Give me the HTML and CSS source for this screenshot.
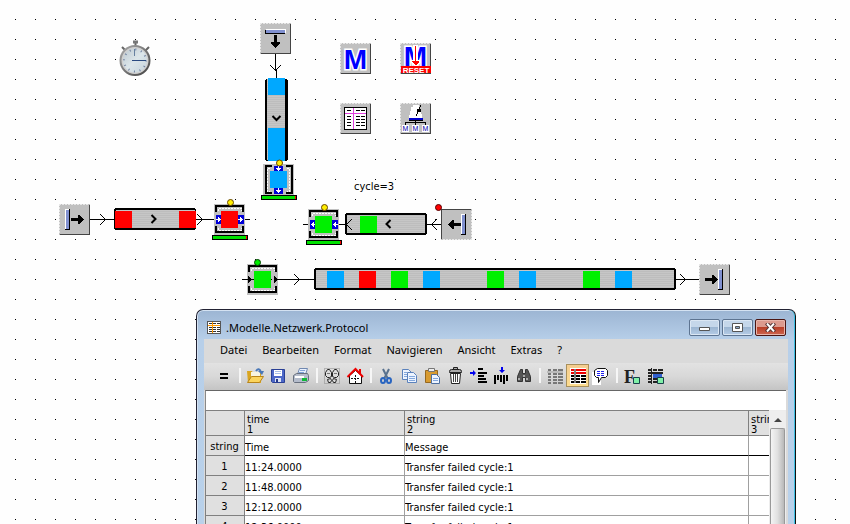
FILE: index.html
```html
<!DOCTYPE html>
<html lang="de">
<head>
<meta charset="utf-8">
<meta name="viewport" content="width=device-width, initial-scale=1">
<title>Netzwerk</title>
<link rel="stylesheet" href="styles.css">
</head>
<body>
<main class="canvas">
<svg class="plant" width="850" height="310" viewBox="0 0 850 310" shape-rendering="crispEdges" aria-label="Modell">
  <defs>
    <pattern id="belt" width="4" height="2" patternUnits="userSpaceOnUse"><path fill="#bdbdbd" d="M0 0h4v2H0z"/><path fill="#c6c6c6" d="M0 0h4v1H0z"/></pattern>
    <linearGradient id="watch" x2="1" y2="1"><stop stop-color="#bcc8d0"/><stop offset=".5" stop-color="#dce6ea"/><stop offset="1" stop-color="#c5d3db"/></linearGradient>
    <linearGradient id="rim" x2="1" y2="1"><stop stop-color="#aaa"/><stop offset="1" stop-color="#444"/></linearGradient>
    <g id="box">
      <path fill="#c0c0c0" d="M0 0h31v31H0z"/>
      <path fill="none" stroke="#e8e8e8" stroke-dasharray="2 1" d="M0 .5h30M.5 0v30"/>
      <path fill="none" stroke="#444" d="M1 30.5h29.500V1"/>
    </g>
    <g id="slot"><path fill="#000" d="M0 0h5v21H0z"/><path fill="#fff" d="M0 0h4v20H0z"/><path fill="#8090d0" d="M1 1h3v19H1z"/></g>
    <path id="arrow" d="M0 3h7V0h2v1h1v1h1v1h1v1h1v1h-1v1h-1v1h-1v1H9v1H7V6H0z"/>
    <path id="chev" fill="none" stroke="#000" shape-rendering="auto" d="M0-5.500L5.500 0 0 5.500"/>
    <path id="mark" fill="none" stroke="#000" stroke-width="2" shape-rendering="auto" d="M0-4l4 4-4 4"/>
    <g id="station">
      <path fill="#c0c0c0" d="M0 0h31v31H0z"/>
      <path fill="none" stroke="#fff" stroke-dasharray="2 1" d="M4 7V4.500h23V7M4 24v2.500h23V24"/>
      <path fill="none" stroke="#000" stroke-width="2" d="M2 8V2h27v6M2 22v6h27v-6"/>
    </g>
    <g id="bar"><path d="M0 0h36v5H0z"/><path fill="#00e000" d="M1 1h33v3H1z"/><path fill="red" d="M34 1h1v3h-1z"/></g>
    <g id="port"><path fill="#0000d8" d="M0 0h6v9H0z"/><path fill="#fff" d="M0 4h2V2h1v1h1v1h1v1H4v1H3v1H2V5H0z"/></g>
  </defs>

  <!-- event controller -->
  <g shape-rendering="auto">
    <path stroke="#666" stroke-width="2" d="M135.500 41v5M122 47l4 4M149 47l-4 4"/>
    <path stroke="#777" stroke-width="3" d="M133 42h5"/>
    <circle cx="135" cy="60.500" r="14.500" fill="#d0d0d0" stroke="url(#rim)" stroke-width="2"/>
    <circle cx="135" cy="60.500" r="12" fill="url(#watch)"/>
    <circle cx="135" cy="60.500" r="11" fill="none" stroke="#7080a0" stroke-width="2" stroke-dasharray="1 4.760"/>
    <path stroke="#2a4a80" d="M132 60.500h14"/><path stroke="#6680a0" d="M134.500 49v7"/>
  </g>

  <!-- vertical feed -->
  <path fill="none" stroke="#000" d="M275.500 54v17M276.500 70v9M279.500 159v8"/>
  <use href="#box" transform="translate(260 23)"/>
  <path d="M265 30h20v4h-20z"/><path fill="#fff" d="M266 29h20v4h-20z"/><path fill="#8090d0" d="M266 30h19v3h-19z"/>
  <use href="#arrow" transform="translate(280 35) rotate(90)"/>
  <use href="#chev" transform="translate(275.500 65) rotate(90)"/>
  <path d="M266 79h21v82h-21zM265 80h23v80h-23z"/><path fill="url(#belt)" d="M267 79h18v81h-18z"/>
  <path fill="#00a8ff" d="M268 78h17v17h-17zM268 128h17v33h-17z"/>
  <use href="#mark" transform="translate(276.500 116) rotate(90)"/>
  <use href="#station" transform="translate(294 164) rotate(90)"/>
  <use href="#port" transform="translate(283 166) rotate(90)"/>
  <use href="#port" transform="translate(283 188) rotate(90)"/>
  <path fill="#00a8ff" d="M270 171h17v17h-17z"/>
  <use href="#bar" x="261" y="195"/>
  <circle cx="279.500" cy="163" r="3" fill="#fe0" stroke="#640" shape-rendering="auto"/>

  <!-- left feed -->
  <path stroke="#000" d="M90 219.500h24M196 219.500h54"/>
  <use href="#box" transform="translate(59 204)"/><use href="#slot" x="65" y="209"/><use href="#arrow" x="71" y="215"/>
  <use href="#chev" x="100" y="219.500"/><use href="#chev" x="197" y="219.500"/>
  <path d="M115 208h80v1h1v20h-1v1h-80v-1h-1v-20h1z"/><path fill="url(#belt)" d="M116 210h79v18h-79z"/>
  <path fill="red" d="M115 211h17v17h-17zM179 211h17v17h-17z"/><use href="#mark" x="151.500" y="219"/>
  <use href="#station" x="214" y="204"/>
  <use href="#port" x="216" y="215"/><use href="#port" x="238" y="215"/>
  <path fill="red" d="M221 211h17v17h-17z"/><use href="#bar" x="212" y="235"/>
  <circle cx="230.500" cy="202.500" r="3" fill="#fe0" stroke="#640" shape-rendering="auto"/>

  <!-- right feed -->
  <path stroke="#000" d="M303 224.500h42M427 224.500h14"/>
  <use href="#station" x="308" y="209"/>
  <use href="#port" transform="translate(316 220) scale(-1 1)"/><use href="#port" transform="translate(338 220) scale(-1 1)"/>
  <path fill="#00f000" d="M315 216h17v17h-17z"/><use href="#bar" x="306" y="240"/>
  <circle cx="324.500" cy="207.500" r="3" fill="#fe0" stroke="#640" shape-rendering="auto"/>
  <path d="M346 213h80v1h1v20h-1v1h-80v-1h-1v-20h1z"/><path fill="url(#belt)" d="M347 215h78v18h-78z"/>
  <path fill="#00f000" d="M360 216h17v17h-17z"/>
  <use href="#mark" transform="translate(390.500 224) scale(-1 1)"/>
  <use href="#chev" transform="translate(352 224.500) scale(-1 1)"/><use href="#chev" transform="translate(437 224.500) scale(-1 1)"/>
  <use href="#box" transform="translate(472 240) rotate(180)"/><use href="#slot" x="461" y="214"/><use href="#arrow" transform="translate(461 220) scale(-1 1)"/>
  <circle cx="438.500" cy="207.500" r="3" fill="red" stroke="#500" shape-rendering="auto"/>

  <!-- main line -->
  <path stroke="#000" d="M242 279.500h72M676 279.500h23"/>
  <use href="#station" x="247" y="264"/><path d="M242 279h30v1h-30zM248 275l4 4.500-4 4.500zM274 275l4 4.500-4 4.500z"/>
  <path fill="#00f000" d="M254 271h17v17h-17z"/>
  <circle cx="257.500" cy="262.500" r="3" fill="#0e0" stroke="#040" shape-rendering="auto"/>
  <use href="#chev" x="294" y="279.500"/><use href="#chev" x="680" y="279.500"/>
  <path d="M315 268h360v1h1v20h-1v1H315v-1h-1v-20h1z"/><path fill="url(#belt)" d="M316 270h358v18H316z"/>
  <path fill="#00a8ff" d="M327 271h17v17h-17zM423 271h17v17h-17zM519 271h17v17h-17zM615 271h17v17h-17z"/>
  <path fill="red" d="M359 271h17v17h-17z"/>
  <path fill="#00f000" d="M391 271h17v17h-17zM487 271h17v17h-17zM583 271h17v17h-17z"/>
  <use href="#box" transform="translate(699 264)"/><use href="#arrow" x="705" y="275"/><use href="#slot" x="718" y="269"/>

  <!-- methods and tables -->
  <use href="#box" transform="translate(340 43)"/><text class="method" x="355.500" y="69">M</text>
  <use href="#box" transform="translate(400 43)"/><text class="method" x="415.500" y="66">M</text>
  <path fill="#fff" d="M413 45h5v15h3v2l-4 4h-3l-4-4v-2h3z"/><path fill="red" d="M415 46h1v15h3v1l-3 3h-1l-3-3v-1h3zM401 66h30v7h-30z"/>
  <text class="reset" x="416" y="73">RESET</text>
  <use href="#box" transform="translate(340 103)"/>
  <path d="M345 108h22v22h-22z"/><path fill="#fff" d="M344 107h22v22h-22z"/>
  <path fill="none" stroke="#000" stroke-width="1" d="M344.500 107.500h22v22h-22z"/>
  <path stroke="#000" d="M347 110.500h4M356 110.500h4M361 110.500h4M347 116.500h4M347 119.500h4M347 122.500h4M347 125.500h4M356 116.500h4M356 119.500h4M356 122.500h4M356 125.500h4M361 116.500h4M361 119.500h4M361 122.500h4M361 125.500h4"/>
  <path stroke="#e040e0" d="M345 113.500h21M353.500 108v21"/>
  <use href="#box" transform="translate(400 103)"/>
  <path fill="#fff" d="M413 105h6v2h1v3h1v4h1v4h-13v-3h1v-4h1v-4h2z"/><path fill="#00c" d="M409 118h14v2h-14z"/>
  <path fill="none" stroke="#000" d="M421 105l-5 11M409 120.500h14M415.500 121v5M405.500 126v-3.500h20v3.500"/><path d="M417 109h4v3h-4z"/>
  <path fill="#fff" d="M402 125h7v7h-7zM412 125h7v7h-7zM422 125h7v7h-7z"/>
  <text class="tiny" x="405.500" y="131">M</text><text class="tiny" x="415.500" y="131">M</text><text class="tiny" x="425.500" y="131">M</text>
  <text class="caption" x="354" y="190">cycle=3</text>
</svg>

<section class="window">
  <header class="titlebar">
    <svg class="app-icon" width="14" height="14" viewBox="0 0 14 14" shape-rendering="crispEdges"><path fill="#fff" stroke="#555" d="M.5.5h13v12H.5z"/><path stroke="#333" stroke-dasharray="3 1" d="M2 2.500h12M2 6.500h12M2 8.500h12M2 10.500h12"/><path stroke="#f90" d="M1 4.500h12M5.500 1v11"/></svg>
    <h1 class="title">.Modelle.Netzwerk.Protocol</h1>
    <div class="caption-buttons">
      <button class="cap" aria-label="Minimieren"><svg width="13" height="9" viewBox="0 0 13 9"><path fill="#fff" stroke="#555" d="M1.500 4.500h10v3h-10z"/></svg></button>
      <button class="cap" aria-label="Maximieren"><svg width="13" height="9" viewBox="0 0 13 9"><path fill="#fff" stroke="#555" d="M1.500.5h10v8h-10z"/><path fill="#8aa5c5" stroke="#555" d="M4.500 3.500h4v2h-4z"/></svg></button>
      <button class="cap cap-close" aria-label="Schließen"><svg width="13" height="9" viewBox="0 0 13 9"><path stroke="#533" stroke-width="4" d="M2.500 0l8 9M10.500 0l-8 9"/><path stroke="#fff" stroke-width="2" d="M3 .5l7 8M10 .5l-7 8"/></svg></button>
    </div>
  </header>
  <div class="client">
    <nav class="menu">
      <button>Datei</button><button>Bearbeiten</button><button>Format</button><button>Navigieren</button><button>Ansicht</button><button>Extras</button><button>?</button>
    </nav>
    <div class="toolbar" role="toolbar">
      <button aria-label="Gleich"><svg viewBox="0 0 20 20"><path fill="#000" d="M6 7h8v2H6zM6 11h8v2H6z"/></svg></button>
      <span class="sep"></span>
      <button aria-label="Öffnen"><svg viewBox="0 0 20 20"><path fill="#d9a520" d="M2 5h5l1 2h8v10H3z"/><path fill="#f8f4e0" d="M6 6h9v6H6z"/><path fill="#fbd45c" stroke="#b8841a" d="M6.500 10.500h12l-4 6h-12z"/><path fill="none" stroke="#4a78b8" stroke-width="2" d="M11 5q3-4 5 1"/><path fill="#4a78b8" d="M13 5h6l-2 4z"/></svg></button>
      <button aria-label="Speichern"><svg viewBox="0 0 20 20"><path fill="#4d68c8" stroke="#293f94" d="M3.500 3.500h13v13h-12l-1-1z"/><path fill="#fff" d="M6 4h8v6H6z"/><path fill="#a7bfe8" d="M7 5h6v1H7zM7 7h6v1H7z"/><path fill="#dce4f4" d="M7 12h6v4H7z"/><path fill="#24388a" d="M8 13h2v3H8z"/></svg></button>
      <button aria-label="Drucken"><svg viewBox="0 0 20 20"><path fill="#e9f1ff" stroke="#7088b0" d="M8.500 2.500h8l-2 6h-8z"/><path stroke="#7fa2d8" d="M9 4.500h5M8 6.500h5"/><path fill="#b4bccb" stroke="#68707e" d="M2.500 9.500l3-2h11l1 2v5l-3 2h-11l-1-1z"/><path fill="#fff" d="M4 10h9v2H4z"/><path fill="#10b838" d="M11 12h5v3h-5z"/></svg></button>
      <span class="sep"></span>
      <button aria-label="Spur"><svg viewBox="0 0 20 20"><path fill="none" stroke="#888" stroke-dasharray="1 1" d="M2.500 2.500h15v15h-15z"/><g fill="#ddd" stroke="#222"><path d="M5.500 3.500h2l2 3v4l-2 1h-2l-2-2v-3zM12.500 3.500h2l2 3v3l-2 2h-2l-2-1v-4zM5.500 13.500l3-1 1 2-1 2h-2zM14.500 13.500l-3-1-1 2 1 2h2z"/></g><path stroke="#777" d="M5 7.500h3M12 7.500h3"/></svg></button>
      <button aria-label="Start"><svg viewBox="0 0 20 20"><path fill="#fff" stroke="#111" d="M4.500 9.500l6-5 6 5v8h-12z"/><path fill="none" stroke="#e00" stroke-width="2" d="M2.500 11l8-8 7.500 8M15 3v5"/><path stroke="#111" stroke-dasharray="2 1" d="M6 12.500h8M10.500 9v8"/></svg></button>
      <span class="sep"></span>
      <button aria-label="Ausschneiden"><svg viewBox="0 0 20 20"><path stroke="#58718e" stroke-width="2" d="M7 3l5 10M13 3L8 13"/><g fill="none" stroke="#2864c0" stroke-width="2"><ellipse cx="7" cy="14.500" rx="2" ry="2.500"/><ellipse cx="13" cy="14.500" rx="2" ry="2.500"/></g></svg></button>
      <button aria-label="Kopieren"><svg viewBox="0 0 20 20"><g fill="#edf4ff" stroke="#5b82bc"><path d="M3.500 3.500h6l3 3v7h-9z"/><path d="M8.500 6.500h6l3 3v7h-9z"/></g><path stroke="#83a8dd" d="M5 6.500h3M5 8.500h3M5 10.500h3M10 10.500h6M10 12.500h6M10 14.500h6"/></svg></button>
      <button aria-label="Einfügen"><svg viewBox="0 0 20 20"><path fill="#d89b30" stroke="#966820" d="M3.500 4.500h12v12h-12z"/><path fill="#eee" stroke="#777" d="M6.500 2.500h6v3h-6z"/><path fill="#edf4ff" stroke="#4e6f9f" d="M9.500 8.500h5l3 3v6h-8z"/><path stroke="#83a8dd" d="M11 12.500h5M11 14.500h5"/></svg></button>
      <button aria-label="Löschen"><svg viewBox="0 0 20 20"><path fill="#fff" stroke="#222" d="M5.500 7.500h10l-1 10h-8z"/><path fill="#aaa" stroke="#222" d="M4.500 5.500q0-2 2-2h8q2 0 2 2v1h-12zM8.500 3V1.500h4V3"/><path stroke="#444" d="M8.500 8v8M10.500 8v8M12.500 8v8"/></svg></button>
      <button aria-label="Zeile einfügen"><svg viewBox="0 0 20 20"><path fill="#00e" d="M2 6h3V4l3 3-3 3V8H2z"/><path d="M10 2h5v2h-5zM10 6h9v2h-9zM10 9h6v2h-6zM10 12h8v2h-8zM10 15h9v2h-9z"/></svg></button>
      <button aria-label="Spalte einfügen"><svg viewBox="0 0 20 20"><path fill="#00e" d="M10 1h2v3h2l-3 3-3-3h2z"/><path d="M3 9h2v9H3zM6 9h2v5H6zM9 9h2v7H9zM12 9h2v9h-2zM15 9h2v6h-2z"/></svg></button>
      <button aria-label="Suchen"><svg viewBox="0 0 20 20"><path fill="#555" stroke="#333" d="M6.500 3.500h2v4h3v-4h2l3 7v5h-5v-4h-3v4h-5v-5z"/><path fill="#aaa" d="M4 12h2v2H4zM12 12h2v2h-2zM9 9h2v2H9z"/></svg></button>
      <span class="sep"></span>
      <button aria-label="Tabelle"><svg viewBox="0 0 20 20"><path stroke="#777" stroke-width="2" d="M3 4h3M8 4h4M13 4h5M3 8h3M8 8h4M13 8h5M3 11h3M8 11h4M13 11h5M3 14h3M8 14h4M13 14h5M3 17h3M8 17h4M13 17h5"/><path stroke="#999" d="M2 6h16"/></svg></button>
      <button class="active" aria-label="Kopfzeile" aria-pressed="true"><svg viewBox="0 0 20 20"><path fill="#fff" d="M2 2h16v16H2z"/><path stroke="#e00" stroke-width="2" d="M3 4h3M8 4h10M3 7h3M8 7h10"/><path stroke="#000" stroke-width="2" d="M3 10h3M8 10h4M13 10h5M3 13h3M8 13h4M13 13h5M3 16h3M8 16h4M13 16h5"/><path stroke="#000" d="M7 3v14"/></svg></button>
      <button aria-label="Kommentar"><svg viewBox="0 0 20 20"><path fill="#fff" d="M1 6h9v13H1z"/><path fill="#fff" stroke="#111" d="M6.500 2.500h8l2 2v5l-2 2h-4l-3 5v-5h-2l-2-2v-5z"/><path stroke="#22e" d="M6 5.500h8M6 7.500h7M6 9.500h8" stroke-dasharray="3 1"/></svg></button>
      <span class="sep"></span>
      <button aria-label="Schrift"><svg viewBox="0 0 20 20"><text class="glyph" x="2" y="17">F</text><path fill="#80f0a8" stroke="#18404a" d="M11.500 11.500h6v6h-6z"/></svg></button>
      <button aria-label="Zellformat"><svg viewBox="0 0 20 20"><path stroke="#222" stroke-width="2" d="M3 4h3M8 4h4M13 4h5M3 7h15M3 10h3M3 13h3M8 13h4M3 16h3M8 16h4"/><path stroke="#222" d="M6.500 2v16"/><path fill="#3060d0" d="M8 8h9v4H8z"/><path fill="#80f0a8" stroke="#18404a" d="M12.500 11.500h6v6h-6z"/></svg></button>
    </div>
    <input class="formula" type="text" aria-label="Zellinhalt">
    <div class="sheet">
      <div class="grid-view">
        <table class="grid">
          <colgroup><col class="c-head"><col class="c-time"><col class="c-msg"><col></colgroup>
          <thead>
            <tr class="cols"><th></th><th>time<br>1</th><th>string<br>2</th><th>string<br>3</th></tr>
            <tr class="names"><th>string</th><td>Time</td><td>Message</td><td></td></tr>
          </thead>
          <tbody>
            <tr><th>1</th><td>11:24.0000</td><td>Transfer failed cycle:1</td><td></td></tr>
            <tr><th>2</th><td>11:48.0000</td><td>Transfer failed cycle:1</td><td></td></tr>
            <tr><th>3</th><td>12:12.0000</td><td>Transfer failed cycle:1</td><td></td></tr>
            <tr><th>4</th><td>12:36.0000</td><td>Transfer failed cycle:1</td><td></td></tr>
          </tbody>
        </table>
      </div>
      <div class="scroll">
        <button class="scroll-up" aria-label="Nach oben"><svg width="8" height="4" viewBox="0 0 8 4"><path fill="#444" d="M0 4l4-4 4 4z"/></svg></button>
        <div class="thumb"></div>
      </div>
    </div>
  </div>
</section>
</main>
</body>
</html>
```
FILE: styles.css
```css
* { box-sizing: border-box; }
body { margin: 0; }
button { border: 0; padding: 0; background: none; font: inherit; color: inherit; }

.canvas {
  position: relative;
  height: 100vh;
  overflow: hidden;
  font: 11px/16px "Noto Sans", sans-serif;
  color: #000;
  background: #fefefe conic-gradient(from 0deg at 1px 1px, transparent 75%, #000 0) 15px 19px / 20px 20px;
}
.plant { display: block; }
.method {
  font: bold 28px "Liberation Sans Narrow", "Liberation Sans", sans-serif;
  text-anchor: middle;
  fill: #00f;
  stroke: #fff;
  stroke-width: 3px;
  paint-order: stroke;
}
.reset { font: bold 8px "Liberation Sans", sans-serif; text-anchor: middle; fill: #fff; }
.tiny { font: 7px "Liberation Sans", sans-serif; text-anchor: middle; fill: #00a; }
.caption { font: 11px "DejaVu Sans Condensed", "DejaVu Sans", sans-serif; }
.glyph { font: bold 18px "Liberation Serif", serif; fill: #222; }

.window {
  position: absolute;
  left: 196px;
  top: 309px;
  bottom: 0;
  width: 600px;
  display: flex;
  flex-direction: column;
  padding: 0 7px;
  border: 1px solid #223;
  border-right-color: #111;
  border-bottom: 0;
  border-radius: 7px 7px 0 0;
  background: linear-gradient(#9cb5d3, #b7cfe9 30px, #b9d1ea);
  box-shadow: inset -1px 0 #3fc0e4, inset 0 1px #d4e2f2, inset 1px 0 #d4e2f2;
}
.titlebar { display: flex; align-items: center; height: 29px; padding: 6px 2px 0 3px; }
.title { flex: 1; margin: 0 0 0 5px; font-size: 11px; font-weight: 400; }
.caption-buttons { display: flex; gap: 2px; }
.cap {
  display: flex;
  align-items: center;
  justify-content: center;
  width: 31px;
  height: 17px;
  border: 1px solid #5d7491;
  border-radius: 2px;
  background: linear-gradient(#c5d7ea 50%, #9cb6d2 50%, #b5cce6);
  box-shadow: inset 0 0 0 1px #dbe7f4;
}
.cap-close {
  border-color: #4a1512;
  background: linear-gradient(#dc9a8e 50%, #b93f28 50%, #cd6650);
  box-shadow: inset 0 0 0 1px #e8b5ab;
}

.client { flex: 1; min-height: 0; display: flex; flex-direction: column; background: #dadada; }
.menu { display: flex; gap: 15px; height: 24px; padding: 0 16px 2px; align-items: center; }
.toolbar {
  display: flex;
  align-items: center;
  height: 27px;
  padding: 0 0 2px 8px;
  background: linear-gradient(#e2e2e2, #d8d8d8 50%, #c4c4c4);
}
.toolbar button { display: flex; align-items: center; justify-content: center; width: 23px; height: 23px; }
.toolbar svg { flex: none; width: 20px; height: 20px; }
.toolbar .active { border: 1px solid #a8905c; background: linear-gradient(#f5cd90, #fddc8e); }
.sep { width: 2px; height: 15px; margin: 0 2px 0 4px; background: #f6f6f6; }

.formula {
  height: 20px;
  margin: 0 2px 0 1px;
  padding: 0 2px;
  border: 0;
  border-top: 1px solid #666;
  border-left: 1px solid #888;
  background: #fff;
  font: inherit;
}
.sheet { flex: 1; min-height: 0; display: flex; margin: 0 2px 0 1px; background: #fff; }
.grid-view { flex: 1; min-width: 0; overflow: hidden; }
.grid {
  width: 100%;
  table-layout: fixed;
  border-collapse: separate;
  border-spacing: 0;
  border-top: 1px solid #808080;
  border-left: 1px solid #808080;
  font: 11px/14px "DejaVu Sans Condensed", "DejaVu Sans", sans-serif;
}
.c-head { width: 39px; }
.c-time { width: 160px; }
.c-msg { width: 344px; }
.grid th, .grid td {
  height: 20px;
  padding: 5px 0 0;
  border: 0 solid #a0a0a0;
  border-width: 0 1px 1px 0;
  text-align: left;
  font-weight: 400;
  white-space: nowrap;
  overflow: hidden;
}
.grid th { padding: 2px 1px 0 0; border-color: #808080; background: #e0e0e0; text-align: center; }
.grid .cols th { height: 24px; padding: 4px 0 0 2px; line-height: 10px; text-align: left; }
.grid .names td { border-bottom-color: #000; }
.grid tr > :last-child { border-right: 0; }

.scroll { width: 17px; display: flex; flex-direction: column; border: 1px solid #ededed; border-bottom: 0; background: #eee; }
.scroll-up { display: flex; align-items: center; justify-content: center; height: 17px; }
.thumb { flex: 1; border: 1px solid #999; border-bottom: 0; border-radius: 2px 2px 0 0; background: linear-gradient(90deg, #f4f4f4, #e0e0e0 50%, #b8b8b8); }
```
